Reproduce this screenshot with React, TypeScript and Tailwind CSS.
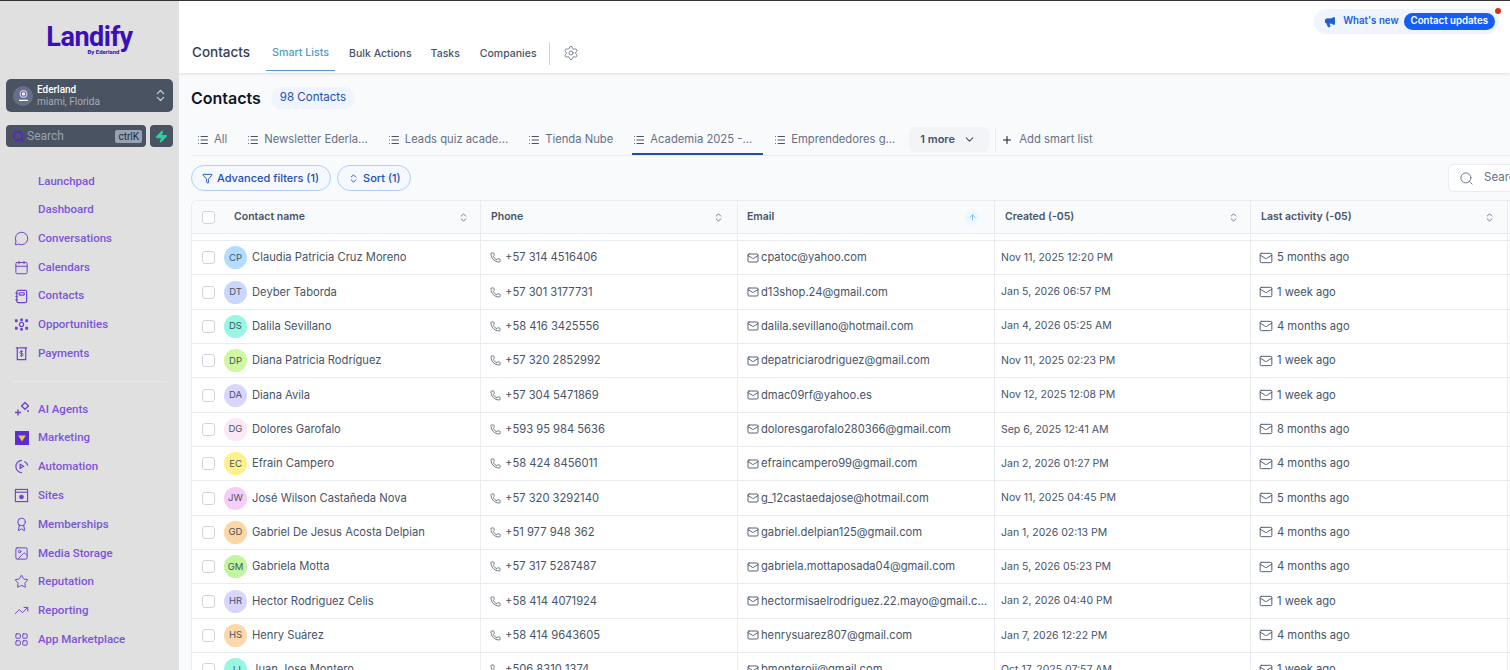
import {
  ArrowUp,
  Award,
  Calendar,
  ChevronDown,
  ChevronsUpDown,
  Funnel,
  Image,
  LayoutGrid,
  List,
  Mail,
  Megaphone,
  MessageCircle,
  Phone,
  Plus,
  Search,
  Settings,
  Star,
  TrendingUp,
  Zap,
} from "lucide-react";
import type { ReactNode } from "react";

const iconClass = "h-[15px] w-[15px] stroke-[1.6]";

function ContactsIcon() {
  return (
    <svg viewBox="0 0 16 16" className="h-[15px] w-[15px]" fill="none" stroke="currentColor" strokeWidth="1.3">
      <rect x="3" y="1.5" width="10.5" height="13" rx="1.5" />
      <rect x="5.5" y="4" width="5.5" height="2.5" rx="0.8" />
      <path d="M1.5 4.5h2.5M1.5 8h2.5M1.5 11.5h2.5" />
    </svg>
  );
}

function OpportunitiesIcon() {
  return (
    <svg viewBox="0 0 16 16" className="h-[15px] w-[15px]" fill="currentColor">
      <circle cx="8" cy="3" r="1.6" />
      <circle cx="8" cy="13" r="1.6" />
      <rect x="1" y="2.5" width="3" height="3" rx="0.6" />
      <rect x="12" y="2.5" width="3" height="3" rx="0.6" />
      <rect x="1" y="10.5" width="3" height="3" rx="0.6" />
      <rect x="12" y="10.5" width="3" height="3" rx="0.6" />
      <circle cx="8" cy="8" r="2.2" fill="none" stroke="currentColor" strokeWidth="1.3" />
    </svg>
  );
}

function PaymentsIcon() {
  return (
    <svg viewBox="0 0 16 16" className="h-[15px] w-[15px]" fill="none" stroke="currentColor" strokeWidth="1.3">
      <path d="M2 2h12M3.5 2v12.5h9V2" />
      <path d="M9.6 5.6H7.4a1 1 0 0 0 0 2.4h1.2a1 1 0 0 1 0 2.4H6.4M8 4.6v6.8" strokeWidth="1" />
    </svg>
  );
}

function AgentsIcon() {
  return (
    <svg viewBox="0 0 16 16" className="h-[16px] w-[16px]" fill="none" stroke="currentColor" strokeWidth="1.4">
      <path d="M11 1.5l3.4 3.4L11 8.3 7.6 4.9z" />
      <path d="M4 8.5v6M1 11.5h6M14 9v2" />
    </svg>
  );
}

function MarketingIcon() {
  return (
    <svg viewBox="0 0 14 14" className="h-[14px] w-[14px]">
      <rect width="14" height="14" fill="#5b2fc9" />
      <path d="M3.2 4.6h7.6L7 10.6z" fill="#f2c14e" />
    </svg>
  );
}

function AutomationIcon() {
  return (
    <svg viewBox="0 0 16 16" className="h-[15px] w-[15px]" fill="none" stroke="currentColor" strokeWidth="1.3">
      <path d="M8.5 1.5A6.5 6.5 0 1 0 8.5 14.5" />
      <path d="M11 2.6A6.5 6.5 0 0 1 14.7 7" />
      <path d="M6.5 5.6l3.6 2.2-3.6 2.2z" />
    </svg>
  );
}

function SitesIcon() {
  return (
    <svg viewBox="0 0 16 16" className="h-[15px] w-[15px]" fill="none" stroke="currentColor" strokeWidth="1.2">
      <rect x="1.5" y="1.5" width="13" height="13" />
      <path d="M1.5 4.5h13" />
      <circle cx="8" cy="9.6" r="1.9" fill="currentColor" />
    </svg>
  );
}

const topNav: { label: string; icon?: ReactNode }[] = [
  { label: "Launchpad" },
  { label: "Dashboard" },
  { label: "Conversations", icon: <MessageCircle className={iconClass} /> },
  { label: "Calendars", icon: <Calendar className={iconClass} /> },
  { label: "Contacts", icon: <ContactsIcon /> },
  { label: "Opportunities", icon: <OpportunitiesIcon /> },
  { label: "Payments", icon: <PaymentsIcon /> },
];

const bottomNav: { label: string; icon: ReactNode }[] = [
  { label: "AI Agents", icon: <AgentsIcon /> },
  { label: "Marketing", icon: <MarketingIcon /> },
  { label: "Automation", icon: <AutomationIcon /> },
  { label: "Sites", icon: <SitesIcon /> },
  { label: "Memberships", icon: <Award className={iconClass} /> },
  { label: "Media Storage", icon: <Image className={iconClass} /> },
  { label: "Reputation", icon: <Star className={iconClass} /> },
  { label: "Reporting", icon: <TrendingUp className={iconClass} /> },
  { label: "App Marketplace", icon: <LayoutGrid className={iconClass} /> },
];

const tabs = ["All", "Newsletter Ederla...", "Leads quiz acade...", "Tienda Nube"];

const contacts = [
  { i: "CP", bg: "bg-[#b2ddff]", name: "Claudia Patricia Cruz Moreno", phone: "+57 314 4516406", email: "cpatoc@yahoo.com", created: "Nov 11, 2025 12:20 PM", last: "5 months ago" },
  { i: "DT", bg: "bg-[#c7d7fe]", name: "Deyber Taborda", phone: "+57 301 3177731", email: "d13shop.24@gmail.com", created: "Jan 5, 2026 06:57 PM", last: "1 week ago" },
  { i: "DS", bg: "bg-[#99f6e0]", name: "Dalila Sevillano", phone: "+58 416 3425556", email: "dalila.sevillano@hotmail.com", created: "Jan 4, 2026 05:25 AM", last: "4 months ago" },
  { i: "DP", bg: "bg-[#d0f8a0]", name: "Diana Patricia Rodríguez", phone: "+57 320 2852992", email: "depatriciarodriguez@gmail.com", created: "Nov 11, 2025 02:23 PM", last: "1 week ago" },
  { i: "DA", bg: "bg-[#d9d6fe]", name: "Diana Avila", phone: "+57 304 5471869", email: "dmac09rf@yahoo.es", created: "Nov 12, 2025 12:08 PM", last: "1 week ago" },
  { i: "DG", bg: "bg-[#fbe8f7]", name: "Dolores Garofalo", phone: "+593 95 984 5636", email: "doloresgarofalo280366@gmail.com", created: "Sep 6, 2025 12:41 AM", last: "8 months ago" },
  { i: "EC", bg: "bg-[#fef08a]", name: "Efrain Campero", phone: "+58 424 8456011", email: "efraincampero99@gmail.com", created: "Jan 2, 2026 01:27 PM", last: "4 months ago" },
  { i: "JW", bg: "bg-[#f5cdf7]", name: "José Wilson Castañeda Nova", phone: "+57 320 3292140", email: "g_12castaedajose@hotmail.com", created: "Nov 11, 2025 04:45 PM", last: "5 months ago" },
  { i: "GD", bg: "bg-[#fdd6a5]", name: "Gabriel De Jesus Acosta Delpian", phone: "+51 977 948 362", email: "gabriel.delpian125@gmail.com", created: "Jan 1, 2026 02:13 PM", last: "4 months ago" },
  { i: "GM", bg: "bg-[#c2f5a0]", name: "Gabriela Motta", phone: "+57 317 5287487", email: "gabriela.mottaposada04@gmail.com", created: "Jan 5, 2026 05:23 PM", last: "4 months ago" },
  { i: "HR", bg: "bg-[#d9d6fe]", name: "Hector Rodriguez Celis", phone: "+58 414 4071924", email: "hectormisaelrodriguez.22.mayo@gmail.com", created: "Jan 2, 2026 04:40 PM", last: "1 week ago" },
  { i: "HS", bg: "bg-[#fed7aa]", name: "Henry Suárez", phone: "+58 414 9643605", email: "henrysuarez807@gmail.com", created: "Jan 7, 2026 12:22 PM", last: "4 months ago" },
  { i: "JJ", bg: "bg-[#99f6e0]", name: "Juan Jose Montero", phone: "+506 8310 1374", email: "bmonteroji@gmail.com", created: "Oct 17, 2025 07:57 AM", last: "1 week ago" },
];

function SortIcon() {
  return <ChevronsUpDown className="h-[11px] w-[11px] text-[#667085]" />;
}

function Checkbox() {
  return <span className="h-[13px] w-[13px] shrink-0 rounded-[3px] border border-[#d0d5dd] bg-white" />;
}

function NavRow({ label, icon, h }: { label: string; icon?: ReactNode; h: string }) {
  return (
    <div className={`flex items-center ${h}`}>
      <span className="flex w-[17px] justify-center">{icon}</span>
      <span className="ml-[8px] text-[11.5px] font-medium text-[#7c54d9]">{label}</span>
    </div>
  );
}

function Sidebar() {
  return (
    <aside className="flex w-[179px] shrink-0 flex-col bg-[#e0e0e0] font-['Roboto',sans-serif]">
      <div className="flex h-[78px] flex-col items-center pt-[23px]">
        <div className="text-[27px] font-bold leading-[27px] tracking-[-0.5px] text-[#3b0fb8]">Landify</div>
        <div className="-mt-[2px] ml-[28px] text-[6px] font-bold leading-[6px] text-[#3b0fb8]">By Ederland</div>
      </div>

      <div className="mx-[6px] flex h-[33px] items-center rounded-[5px] bg-[#4a5361] pl-[7px] pr-[5px]">
        <span className="flex h-[20px] w-[20px] items-center justify-center rounded-full bg-[#667085]">
          <svg viewBox="0 0 16 16" className="h-[13px] w-[13px]" fill="none" stroke="#c9b5ff" strokeWidth="1.6">
            <circle cx="8" cy="6" r="4" />
            <circle cx="8" cy="6" r="1.2" stroke="#ffffff" />
            <path d="M2.5 14h11" stroke="#ffffff" />
          </svg>
        </span>
        <div className="ml-[4px] flex-1 leading-[12px]">
          <div className="text-[10px] font-medium text-white">Ederland</div>
          <div className="text-[10px] text-[#a6adb8]">miami, Florida</div>
        </div>
        <ChevronsUpDown className="h-[15px] w-[15px] text-[#c6ccd6]" />
      </div>

      <div className="mx-[6px] mt-[13px] flex h-[22px] gap-[4px]">
        <div className="flex w-[140px] items-center rounded-[4px] bg-[#4a5361] pl-[6px] pr-[4px]">
          <Search className="h-[13px] w-[13px] stroke-[3] text-[#5b21d6]" />
          <span className="ml-[2px] flex-1 text-[12px] text-[#9aa2ad]">Search</span>
          <span className="rounded-[2px] bg-[#98a2b3] px-[3px] text-[10px] leading-[13px] text-[#1d2939]">ctrlK</span>
        </div>
        <div className="flex w-[23px] items-center justify-center rounded-[4px] bg-[#4a5361]">
          <Zap className="h-[13px] w-[13px] fill-[#2fcf9f] text-[#2fcf9f]" />
        </div>
      </div>

      <nav className="mt-[20px] px-[6px]">
        {topNav.map((n) => (
          <div key={n.label} className="pl-[7px] text-[#6d44cf]">
            <NavRow label={n.label} icon={n.icon} h="h-[28.7px]" />
          </div>
        ))}
        <div className="mx-[7px] my-[13px] h-px bg-[#e9e9e9]" />
        {bottomNav.map((n) => (
          <div key={n.label} className="pl-[7px] text-[#6d44cf]">
            <NavRow label={n.label} icon={n.icon} h="h-[28.8px]" />
          </div>
        ))}
      </nav>
    </aside>
  );
}

function TopBar() {
  return (
    <header className="relative z-10 h-[72px] shrink-0 bg-white shadow-[0_1px_3px_rgba(16,24,40,0.12)]">
      <div className="flex justify-end pr-[11px] pt-[8px]">
        <div className="relative flex h-[25px] items-center rounded-full bg-[#eff4ff] pl-[10px] pr-[4px]">
          <Megaphone className="h-[12px] w-[12px] fill-[#1d5fd6] text-[#1d5fd6]" />
          <span className="ml-[7px] pb-[1px] text-[9.7px] font-semibold text-[#1d5fd6]">What's new</span>
          <span className="ml-[5px] flex h-[17px] items-center rounded-full bg-[#155eef] px-[7px] pb-[1px] text-[9.7px] font-semibold text-white">
            Contact updates
          </span>
          <span className="absolute right-[-2px] top-[-1px] h-[6px] w-[6px] rounded-full bg-[#d92d20]" />
        </div>
      </div>
      <div className="mt-[1px] flex h-[36px] items-center pl-[13px]">
        <span className="pb-[2px] text-[13.5px] font-medium text-[#344054]">Contacts</span>
        <div className="ml-[16px] flex h-full">
          <span className="flex items-center border-b border-[#4d9cc7] px-[6px] pt-[2px] text-[10.7px] font-medium text-[#4d9cc7]">Smart Lists</span>
          <span className="ml-[14px] flex items-center pt-[2px] text-[10.5px] font-medium text-[#475467]">Bulk Actions</span>
          <span className="ml-[19px] flex items-center pt-[2px] text-[10.5px] font-medium text-[#475467]">Tasks</span>
          <span className="ml-[20px] flex items-center pt-[2px] text-[10.5px] font-medium text-[#475467]">Companies</span>
        </div>
        <span className="ml-[12px] h-[23px] w-px bg-[#d0d5dd]" />
        <Settings className="ml-[13px] h-[16px] w-[16px] stroke-[1.3] text-[#667085]" />
      </div>
    </header>
  );
}

function Tab({ label, active, className = "" }: { label: string; active?: boolean; className?: string }) {
  return (
    <div className={`flex h-[31px] items-center gap-[5px] pl-[1px] pr-[11px] ${active ? "border-b-2 border-[#1d4fb0] pt-[2px]" : ""} ${className}`}>
      <List className="h-[12px] w-[12px] text-[#475467]" />
      <span className="whitespace-nowrap text-[11.25px] text-[#667085]">{label}</span>
    </div>
  );
}

function HeaderCell({ width, children, up, pad }: { width: string; children: ReactNode; up?: boolean; pad: string }) {
  return (
    <div className={`flex shrink-0 items-center justify-between border-r border-[#eaecf0] ${width} ${pad}`}>
      <span className="text-[10.5px] font-semibold text-[#475467]">{children}</span>
      {up ? (
        <span className="flex h-[16px] w-[16px] items-center justify-center rounded-full bg-[#eff8ff]">
          <ArrowUp className="h-[9px] w-[9px] text-[#53b1fd]" />
        </span>
      ) : (
        <SortIcon />
      )}
    </div>
  );
}

function Table() {
  return (
    <div className="mt-[9px] rounded-t-[6px] border-x border-t border-[#eaecf0] bg-white text-[#475467]">
      <div className="flex h-[33px] rounded-t-[6px] border-b border-[#eaecf0] bg-[#f9fafb]">
        <HeaderCell width="w-[289px]" pad="pl-[10px] pr-[11px]">
          <span className="flex items-center gap-[19px]">
            <Checkbox />
            Contact name
          </span>
        </HeaderCell>
        <HeaderCell width="w-[257px]" pad="pl-[10px] pr-[13px]">Phone</HeaderCell>
        <HeaderCell width="w-[257px]" pad="pl-[9px] pr-[14px]" up>Email</HeaderCell>
        <HeaderCell width="w-[256px]" pad="pl-[10px] pr-[11px]">Created (-05)</HeaderCell>
        <HeaderCell width="w-[257px]" pad="pl-[10px] pr-[12px]">Last activity (-05)</HeaderCell>
      </div>
      <div className="flex h-[7px] border-b border-[#eaecf0]">
        <div className="w-[289px] border-r border-[#eaecf0]" />
        <div className="w-[257px] border-r border-[#eaecf0]" />
        <div className="w-[257px] border-r border-[#eaecf0]" />
        <div className="w-[256px] border-r border-[#eaecf0]" />
        <div className="w-[257px] border-r border-[#eaecf0]" />
      </div>
      {contacts.map((c) => (
        <div key={c.i + c.name} className="flex h-[34.35px] border-b border-[#eaecf0] text-[11.2px]">
          <div className="flex w-[289px] shrink-0 items-center border-r border-[#eaecf0] pl-[10px]">
            <Checkbox />
            <span className={`ml-[9px] flex h-[23px] w-[23px] shrink-0 items-center justify-center rounded-full text-[9.5px] text-[#475467] ${c.bg}`}>
              {c.i}
            </span>
            <span className="ml-[5px] truncate">{c.name}</span>
          </div>
          <div className="flex w-[257px] shrink-0 items-center gap-[4px] border-r border-[#eaecf0] pl-[9px]">
            <Phone className="h-[11px] w-[11px] stroke-[1.6]" />
            {c.phone}
          </div>
          <div className="flex w-[257px] shrink-0 items-center gap-[2px] border-r border-[#eaecf0] pl-[9px] pr-[2px]">
            <Mail className="h-[12px] w-[12px] shrink-0 stroke-[1.8]" />
            <span className="truncate">{c.email}</span>
          </div>
          <div className="flex w-[256px] shrink-0 items-center border-r border-[#eaecf0] pl-[6px] text-[10.5px]">
            {c.created}
          </div>
          <div className="flex w-[257px] shrink-0 items-center gap-[4px] border-r border-[#eaecf0] pl-[8px]">
            <Mail className="h-[14px] w-[14px] stroke-[1.6]" />
            {c.last}
          </div>
        </div>
      ))}
    </div>
  );
}

export default function App() {
  return (
    <div className="flex h-screen w-full flex-col overflow-hidden bg-[#f9fafb] font-['Inter',sans-serif]">
      <div className="h-px shrink-0 bg-[#333333]" />
      <div className="flex min-h-0 flex-1">
        <Sidebar />
        <main className="flex min-w-0 flex-1 flex-col overflow-hidden">
          <TopBar />
          <div className="w-[1361px] shrink-0 pl-[12px]">
            <div className="mt-[14px] flex h-[22px] items-center">
              <h1 className="text-[16px] font-semibold text-[#101828]">Contacts</h1>
              <span className="ml-[10px] flex h-[22px] items-center rounded-full bg-[#eff4ff] px-[9px] pb-[1px] text-[11.5px] text-[#1d4fb0]">
                98 Contacts
              </span>
            </div>
            <div className="mt-[15px] flex items-center gap-[8px] border-b border-[#eaecf0] pl-[5px]">
              {tabs.map((t) => (
                <Tab key={t} label={t} />
              ))}
              <Tab label="Academia 2025 -..." active />
              <Tab label="Emprendedores g..." className="ml-[2px]" />
              <div className="-ml-[5px] flex h-[25px] w-[80px] items-center gap-[8px] rounded-[6px] bg-[#f2f4f7] pl-[11px] text-[11px] font-semibold text-[#475467]">
                1 more
                <ChevronDown className="h-[13px] w-[13px]" />
              </div>
              <span className="-ml-[2px] h-[25px] w-px bg-[#eaecf0]" />
              <div className="-ml-[3px] flex items-center gap-[6px] text-[11.3px] text-[#667085]">
                <Plus className="h-[12px] w-[12px] text-[#101828]" />
                Add smart list
              </div>
            </div>
            <div className="mt-[9px] flex h-[26px] items-center justify-between">
              <div className="flex gap-[6px]">
                <div className="flex h-[26px] items-center gap-[4px] rounded-full border border-[#b2ccff] bg-[#f5f8ff] pl-[10px] pr-[11px] text-[11px] font-medium text-[#1d4fb0]">
                  <Funnel className="h-[11px] w-[11px]" />
                  Advanced filters (1)
                </div>
                <div className="flex h-[26px] items-center gap-[4px] rounded-full border border-[#b2ccff] bg-[#f5f8ff] pl-[10px] pr-[9px] text-[11px] font-medium text-[#1d4fb0]">
                  <ChevronsUpDown className="h-[11px] w-[11px]" />
                  Sort (1)
                </div>
              </div>
              <div className="flex h-[28px] w-[92px] items-center gap-[10px] rounded-[6px] border border-[#eaecf0] bg-white pl-[10px] text-[11.5px] text-[#667085]">
                <Search className="h-[15px] w-[15px] stroke-[1.5]" />
                Search
              </div>
            </div>
            <Table />
          </div>
        </main>
      </div>
    </div>
  );
}
